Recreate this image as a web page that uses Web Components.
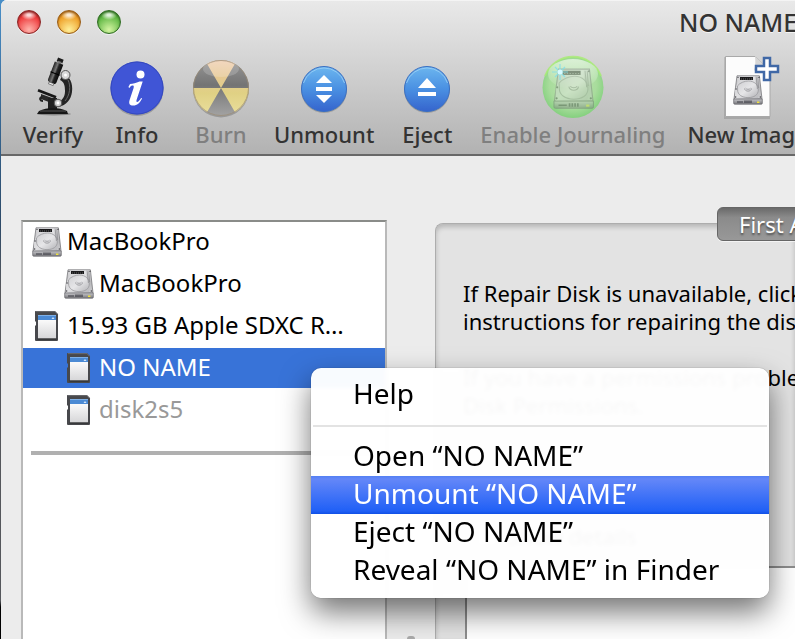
<!DOCTYPE html>
<html lang="en">
<head>
<meta charset="utf-8">
<title>NO NAME</title>
<style>
html, body { margin: 0; height: 100%; overflow: hidden; }
body { font-family: "Noto Sans", "Open Sans", "Liberation Sans", sans-serif; color: #000; background: linear-gradient(#4a8fc8, #35648f 20%, #2d4a68 35%, #55575c 45%, #55575c 94%, #000 95%); }
</style>
</head>
<body>
<disk-window>
  <title-bar slot="header">NO NAME</title-bar>
  <tool-bar slot="header">
    <tool-button icon="microscope">Verify</tool-button>
    <tool-button icon="info">Info</tool-button>
    <tool-button icon="burn" disabled>Burn</tool-button>
    <tool-button icon="unmount">Unmount</tool-button>
    <tool-button icon="eject">Eject</tool-button>
    <tool-button icon="journal" disabled>Enable Journaling</tool-button>
    <tool-button icon="newimage">New Image</tool-button>
  </tool-bar>
  <disk-list slot="sidebar">
    <disk-row icon="hdd">MacBookPro</disk-row>
    <disk-row icon="hdd" child>MacBookPro</disk-row>
    <disk-row icon="sd">15.93 GB Apple SDXC R…</disk-row>
    <disk-row icon="sd" child selected>NO NAME</disk-row>
    <disk-row icon="sd" child dim>disk2s5</disk-row>
  </disk-list>
  <first-aid-pane slot="main"></first-aid-pane>
  <context-menu slot="menu">
    <menu-item>Help</menu-item>
    <menu-separator></menu-separator>
    <menu-item>Open “NO NAME”</menu-item>
    <menu-item active>Unmount “NO NAME”</menu-item>
    <menu-item>Eject “NO NAME”</menu-item>
    <menu-item>Reveal “NO NAME” in Finder</menu-item>
  </context-menu>
</disk-window>
<script>
/* Hard drive drawn in a 30 x 30 box */
const HDD = `
<defs>
<linearGradient id="hb" x1="0" y1="0" x2="0" y2="1"><stop offset="0" stop-color="#dedee0"/><stop offset=".5" stop-color="#b9b9bc"/><stop offset="1" stop-color="#c9c9cc"/></linearGradient>
<linearGradient id="hf" x1="0" y1="0" x2="0" y2="1"><stop offset="0" stop-color="#c8c8cb"/><stop offset="1" stop-color="#77777c"/></linearGradient>
<linearGradient id="hp" x1="0" y1="0" x2="1" y2="1"><stop offset="0" stop-color="#cfcfd2"/><stop offset=".5" stop-color="#e6e6e8"/><stop offset="1" stop-color="#b4b4b8"/></linearGradient>
</defs>
<path d="M4 .8h22.4L29 24H1z" fill="url(#hb)" stroke="#77777b" stroke-width=".8"/>
<path d="M2 24V15l4-12C7 1.8 9 1.6 10 1.6h12l.8 10c3 3 4 8 1.8 11.8z" fill="url(#hp)" opacity=".8"/>
<path d="M4.4 11C7 7.500 12 6 15.500 6c6 0 9.800 4 9.800 9S21 22.600 15 22.600 4.600 19.500 4.600 15c0-1.500 0-2.600-.2-4z" fill="url(#hp)" stroke="#98989c" stroke-width=".8"/>
<path d="M11.500 13.500c.4 1.800 1.700 2.600 3.500 2.600s3.200-.8 3.500-2.600M12.600 13.200c.5.800 1.300 1.100 2.400 1.100s2-.3 2.500-1.100" fill="none" stroke="#8c8c90" stroke-width=".8"/>
<path d="M7 2h13v3H7z" fill="#19191b"/><path d="M8 4h11" stroke="#777" stroke-width=".8" stroke-dasharray="1 1"/>
<path d="M23.200 2l1.200 12M24.800 2l.8 11" stroke="#88888c" stroke-width=".7" fill="none"/>
<g fill="#4a4a4e"><circle cx="5" cy="2.400" r=".7"/><circle cx="26" cy="2.400" r=".7"/><circle cx="3" cy="14" r=".8"/><circle cx="2.600" cy="22" r=".8"/><circle cx="27.400" cy="22" r=".8"/></g>
<path d="M.7 24h28.600v4.200q0 1-1 1H1.700q-1 0-1-1z" fill="url(#hf)" stroke="#66666a" stroke-width=".7"/>
<path d="M4 27h6M12 25.500v2.500M14 25.500v2.500M16 25.500v2.500M18 25.500v2.500" stroke="#3c3c44" stroke-width="1.200"/>
<path d="M24 26.500h2.400v1.500H24z" fill="#f0e23c"/>`;
const BLUE = `<defs><linearGradient id="bl" x1="0" y1="0" x2="0" y2="1"><stop offset="0" stop-color="#6cb6ef"/><stop offset=".5" stop-color="#4a90e2"/><stop offset="1" stop-color="#3564cd"/></linearGradient></defs>
<circle cx="31" cy="34" r="23" fill="#000" opacity=".18"/><circle cx="31" cy="33" r="22.500" fill="url(#bl)" stroke="#3a6fc2"/><path d="M10.500 27a21.500 21.500 0 0 1 41 0" fill="none" stroke="#92cbf5" stroke-width="1"/>`;
const ICONS = {
  hdd: [30, HDD],
  sd: [30, `<defs><linearGradient id="sl" x1="0" y1="0" x2="0" y2="1"><stop offset="0" stop-color="#fafafa"/><stop offset="1" stop-color="#d6d6d8"/></linearGradient></defs>
<path d="M3.500 0H23l3 3v26q0 1-1 1H4q-1 0-1-1V15l1-1v-3l-1-1V1q0-1 .5-1z" fill="#47484c"/><path d="M4 .6h19l2.500 2.700" stroke="#77787c" stroke-width=".7" fill="none"/>
<path d="M6 9h18v18.500H6z" fill="url(#sl)"/><path d="M6 4h18v5H6z" fill="#4b8ad4"/><path d="M6 4h18v1H6z" fill="#7eb0e8"/><path d="M19.500 8l1.500-2 1.500 2z" fill="#d5e6fa"/><path d="M5.500 28h19" stroke="#222" stroke-width=".8"/>`],
  microscope: [62, `<defs><linearGradient id="mt" x1="0" y1="0" x2="1" y2="0"><stop offset="0" stop-color="#222"/><stop offset=".4" stop-color="#777"/><stop offset=".6" stop-color="#222"/><stop offset="1" stop-color="#0c0c0c"/></linearGradient></defs>
<ellipse cx="32" cy="58" rx="17" ry="1.500" fill="#000" opacity=".3"/>
<path d="M41 18c7 2 10 9 9 18-1 8-6 13-13 15l-3-4c6-2 9-6 9-12s-1-9-5-11z" fill="#242424"/><path d="M46 24c3 6 2 15-3 21" stroke="#666" fill="none"/>
<g transform="translate(38.500 3.500) rotate(21)"><path d="M-3-1h6v4h-6z" fill="#1b1b1b"/><path d="M-2 2h4v2h-4z" fill="#777"/><path d="M-4.500 4h9v19q0 2-2 2h-5q-2 0-2-2z" fill="url(#mt)"/><path d="M-5 15h10" stroke="#000"/><path d="M-2.500 25h5v2h-5z" fill="#f0f0f0" stroke="#333" stroke-width=".5"/></g>
<circle cx="43.500" cy="19" r="4.500" fill="#d8d8d8" stroke="#555"/><circle cx="43.500" cy="19" r="1.500" fill="#fff"/>
<path d="M16.500 33l18 7-1 2.500-18-7z" fill="#171717"/><path d="M19 38l14 5-1 5-13-5z" fill="#292929"/><path d="M20 41c-3 1-2 4 1 4" fill="none" stroke="#222" stroke-width="2"/>
<path d="M26 42h9v13h-9z" fill="#202020"/><path d="M17 55q6-3 14-3t14 3l1 3H15z" fill="#171717"/><path d="M18 55h26" stroke="#666" stroke-width=".8"/><circle cx="36" cy="47" r="3.800" fill="#cfcfcf" stroke="#555"/><circle cx="36" cy="47" r="1.400" fill="#fff"/>`],
  info: [62, `<circle cx="31" cy="33.500" r="26.500" fill="#000" opacity=".2"/><circle cx="31" cy="32" r="26.500" fill="#4055d6"/><circle cx="31" cy="32" r="26" fill="none" stroke="#3549be"/>
<circle cx="34.500" cy="18.500" r="4" fill="#fff"/><path d="M24 28c3-.2 6-1 9.500-2.500h3.200l-6 18c-.6 2-.2 2.600.6 2.400 1.400-.5 2.600-2 3.800-4l1 .7c-2.300 4.500-5 7-8.800 7-3.700 0-4.800-2.200-3.700-5.700l4-12c.6-2-.2-2.400-1.300-2.300-1.500.4-1.700.9-3 2.300l-.9-.8z" fill="#fff"/>`],
  burn: [62, `<defs><linearGradient id="bg" x1="0" y1="0" x2="0" y2="1"><stop offset="0" stop-color="#969696"/><stop offset=".45" stop-color="#747474"/><stop offset="1" stop-color="#a3a3a3"/></linearGradient><linearGradient id="by" gradientUnits="userSpaceOnUse" x1="0" y1="3" x2="0" y2="60"><stop offset="0" stop-color="#f0cfb4"/><stop offset=".3" stop-color="#e6c894"/><stop offset=".6" stop-color="#e0d184"/><stop offset="1" stop-color="#eadf9e"/></linearGradient></defs>
<circle cx="31" cy="33.500" r="28" fill="#000" opacity=".2"/><circle cx="31" cy="32" r="28" fill="url(#bg)"/>
<path d="M31 32L17 7.750a28 28 0 0 1 28 0zM31 32H3a28 28 0 0 0 14 24.250zM31 32h28a28 28 0 0 1-14 24.250z" fill="url(#by)"/><circle cx="31" cy="32" r="27.500" fill="none" stroke="#9b8c76" opacity=".75"/><ellipse cx="31" cy="13" rx="18" ry="8" fill="#fff" opacity=".18"/>`],
  unmount: [62, BLUE + `<path d="M31 19l8 8H23zM23 31h16v4H23zM23 39h16l-8 8z" fill="#fff"/>`],
  eject: [62, BLUE + `<path d="M31 22l9 10H22zM22 36h18v4H22z" fill="#fff"/>`],
  journal: [62, `<defs><radialGradient id="jg" cx=".5" cy=".45" r=".55"><stop offset="0" stop-color="#bfe3b2"/><stop offset=".7" stop-color="#a8dc9c"/><stop offset="1" stop-color="#84d07e"/></radialGradient><linearGradient id="jw" x1="0" y1="0" x2="0" y2="1"><stop offset="0" stop-color="#fff" stop-opacity=".6"/><stop offset="1" stop-color="#fff" stop-opacity="0"/></linearGradient></defs>
<circle cx="31" cy="31.500" r="30.500" fill="url(#jg)"/><path d="M3 20a30 30 0 0 1 56 0" fill="none" stroke="#a6ec72" stroke-width="2" opacity=".8"/><ellipse cx="31" cy="18" rx="25" ry="15" fill="url(#jw)"/>
<g transform="translate(11 12) scale(1.380)" opacity=".42">${HDD}</g><path d="M18 8v16M10 16h16M13 11l10 10M23 11L13 21" stroke="#7fe0ec" stroke-width="1.200" opacity=".8"/><circle cx="18" cy="16" r="2.500" fill="#d8fbff"/>`],
  newimage: [62, `<path d="M7 1h30l16 16v46H7z" fill="#000" opacity=".12"/><path d="M8.500.5H38l15 15v45H8.500z" fill="#fcfcfc" stroke="#a9a9a9"/><path d="M38 .5q1 9-1 14 6-2 16 1z" fill="#d6d6d6"/>
<g transform="translate(16 19)">${HDD}</g><path d="M47 2h6v8h8v6h-8v8h-6v-8h-8v-6h8z" fill="#fff" stroke="#4068a6" stroke-width="2.500"/>`]
};
const define = (name, html, setup) => customElements.define(name, class extends HTMLElement {
  constructor() {
    super();
    const t = document.createElement('template');
    t.innerHTML = html;
    this.attachShadow({ mode: 'open' }).append(t.content.cloneNode(true));
  }
  connectedCallback() { if (setup) setup.call(this, this.shadowRoot); }
});
const reset = `button { font: inherit; color: inherit; border: 0; margin: 0; padding: 0; background: none; text-align: left; white-space: nowrap; }`;

define('disk-window', `<style>
:host{display:flex;flex-direction:column;position:relative;height:100vh;margin-left:1px;border-radius:6px 0 0 0;background:#ececec;overflow:hidden}
header{background:linear-gradient(#e9e9e9,#dcdcdc 25%,#b2b2b2);border-bottom:2px solid #686868;box-shadow:inset 0 1px #f4f4f4}
main{flex:1;min-height:0;display:grid;grid-template-columns:minmax(0,61fr) 48px minmax(0,60fr);padding-left:20px}
.grip{align-self:end;justify-self:center;width:8px;height:3px;border-radius:8px 8px 0 0;background:#aaa}
</style><header><slot name="header"></slot></header><main><slot name="sidebar"></slot><div class="grip"></div><slot name="main"></slot></main><slot name="menu"></slot>`);
define('title-bar', `<style>${reset}
:host{display:flex;align-items:center;justify-content:space-between;height:44px;padding-left:16px;font-size:25px;font-weight:500;line-height:32px;color:#333;white-space:nowrap;text-shadow:0 1px #f4f4f4}
nav{display:flex;gap:16px}
button{width:24px;height:24px;border-radius:50%;border:1px solid var(--edge);background:radial-gradient(ellipse 8px 5px at 50% 18%,#fffc 20%,#fff0),radial-gradient(circle at 50% 85%,var(--glow),var(--base) 65%,var(--edge) 100%);box-shadow:inset 0 1px 2px var(--edge),0 1px #fff8}
.r{--edge:#8d2424;--base:#ee3a3c;--glow:#ffb5ad}.y{--edge:#9a5c14;--base:#ee9f27;--glow:#fff09a}.g{--edge:#2f6d22;--base:#5fb743;--glow:#d4f5a2}
h1{margin:0;font:inherit;width:116px}
</style><nav><button class="r" aria-label="Close"></button><button class="y" aria-label="Minimize"></button><button class="g" aria-label="Zoom"></button></nav><h1><slot></slot></h1>`);
define('tool-bar', `<style>:host{display:flex;gap:22px;padding:12px 0 6px 21px}</style><slot></slot>`);
define('tool-button', `<style>${reset}
:host{display:block;flex:none;font-size:22px;font-weight:500;line-height:28px;color:#333;text-shadow:0 1px #ffffff80}
:host([disabled]){color:#7f7f7f}
button{display:flex;flex-direction:column;align-items:center;gap:2px;min-width:62px}
</style><button><sys-icon></sys-icon><slot></slot></button>`, function (r) {
  r.querySelector('sys-icon').setAttribute('name', this.getAttribute('icon'));
  r.querySelector('button').disabled = this.hasAttribute('disabled');
});
define('disk-list', `<style>
:host{display:flex;flex-direction:column;gap:2px;margin-top:64px;background:#fff;border:2px solid #b9b9b9;border-top-color:#8a8c89;border-bottom:0}
hr{box-sizing:border-box;height:4px;border:0;background:#b0b0b0;margin:19px 8px 0}
</style><slot></slot><hr>`);
define('disk-row', `<style>${reset}
:host{display:block;font-size:24px;line-height:38px}
button{display:flex;align-items:center;gap:5px;width:100%;padding:0 0 2px 9px}
sys-icon{padding-top:2px}
:host([child]) button{padding-left:41px}
:host([selected]){background:#3873d8;color:#fff}
:host([dim]){color:#999}
</style><button><sys-icon></sys-icon><slot></slot></button>`, function (r) {
  r.querySelector('sys-icon').setAttribute('name', this.getAttribute('icon'));
});
define('first-aid-pane', `<style>${reset}
:host{display:flex;flex-direction:column;padding-top:51px;font-size:22px;line-height:28px;white-space:nowrap;min-width:0;overflow:hidden}
.tabs{position:relative;padding-left:282px}
.tabs button{min-width:160px;height:34px;padding-left:21px;border:1px solid #666;border-radius:6px;background:linear-gradient(#6a6a6a,#8b8b8b 30%,#989898);color:#fff;text-shadow:0 2px 2px #0007;box-shadow:0 1px #fff9}
section{flex:1;display:flex;flex-direction:column;margin-top:-18px;border:solid #adadad;border-width:1px 0 0 1px;border-radius:8px 0 0 0;background:#e3e3e3;box-shadow:inset 0 3px 5px #0003;padding:55px 0 0 27px}
p{margin:0 0 28px}
label{display:flex;align-items:center;gap:10px;margin-top:75px}
input{width:20px;height:20px;margin:0 0 0 14px}
output{flex:1;margin:16px 0 0 2px;background:#fff;border:solid #8d8d8d;border-width:2px 0 0 2px}
</style><div class="tabs" role="tablist"><button role="tab" aria-selected="true">First Aid</button></div>
<section role="tabpanel"><p>If Repair Disk is unavailable, click Help for<br>instructions for repairing the disk.</p><p>If you have a permissions problem, click Repair<br>Disk Permissions.</p><label><input type="checkbox">Show details</label><output></output></section>`);
define('context-menu', `<style>:host{position:absolute;left:310px;top:368px;display:block;width:458px;padding:8px 0;border-radius:10px;background:#fffffff7;backdrop-filter:blur(2px);box-shadow:0 0 1px #0009,0 14px 30px #0000008c}</style><div role="menu"><slot></slot></div>`);
define('menu-item', `<style>${reset}
:host{display:block;font-size:28px;line-height:34px}
button{display:block;width:100%;padding:0 0 4px 42px}
:host([active]){color:#fff;background:linear-gradient(#5380f3,#6487f8 8%,#2060f6 92%,#1050e6)}
</style><button role="menuitem"><slot></slot></button>`);
define('menu-separator', `<style>:host{display:block;height:2px;margin:11px 2px;background:#e3e3e3}</style>`);
/* Defined last, so each icon already carries its name when it is upgraded */
define('sys-icon', `<style>:host{display:block;flex:none} span,svg{display:block;overflow:visible}</style><span></span>`, function (r) {
  const [n, art] = ICONS[this.getAttribute('name')];
  r.querySelector('span').innerHTML = `<svg width="${n}" height="${n}" viewBox="0 0 ${n} ${n}" aria-hidden="true">${art}</svg>`;
});
</script>
</body>
</html>
